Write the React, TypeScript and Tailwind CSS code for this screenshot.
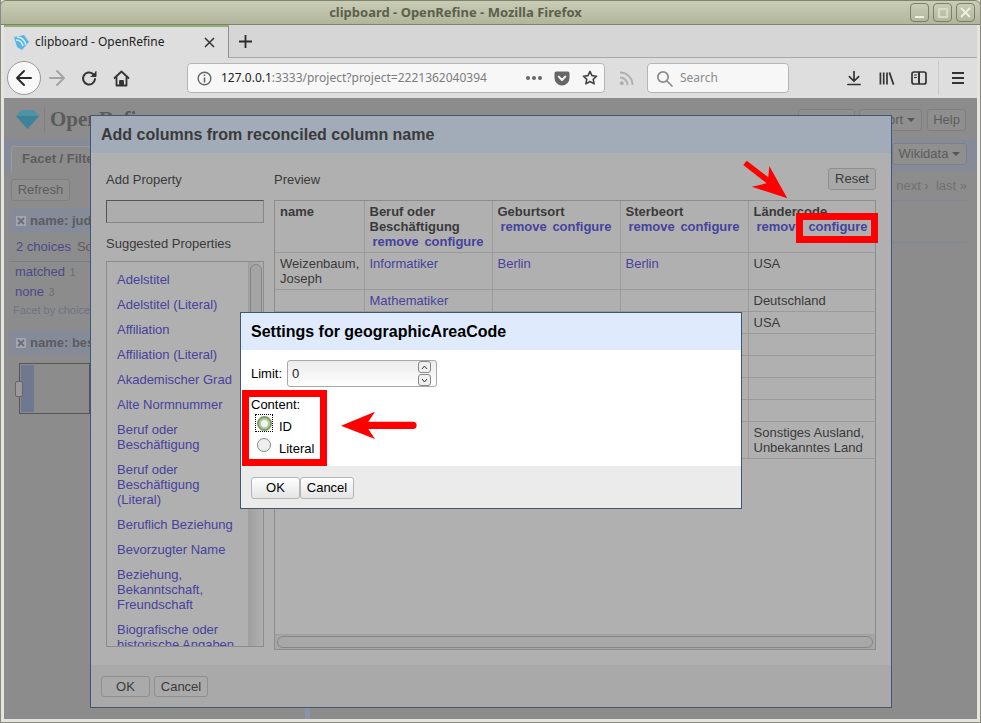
import React from 'react';

const PROPS = [
  'Adelstitel',
  'Adelstitel (Literal)',
  'Affiliation',
  'Affiliation (Literal)',
  'Akademischer Grad',
  'Alte Normnummer',
  'Beruf oder Beschäftigung',
  'Beruf oder Beschäftigung (Literal)',
  'Beruflich Beziehung',
  'Bevorzugter Name',
  'Beziehung, Bekanntschaft, Freundschaft',
  'Biografische oder historische Angaben',
];

const ROWS: [string, string, string, string, string, string][] = [
  ['Weizenbaum, Joseph', 'Informatiker', 'Berlin', 'Berlin', 'USA', 'h-[37px]'],
  ['', 'Mathematiker', '', '', 'Deutschland', 'h-[22px]'],
  ['', '', '', '', 'USA', 'h-[22px]'],
  ['', '', '', '', '', 'h-[22px]'],
  ['', '', '', '', '', 'h-[22px]'],
  ['', '', '', '', '', 'h-[22px]'],
  ['', '', '', '', '', 'h-[22px]'],
  ['', '', '', '', 'Sonstiges Ausland, Unbekanntes Land', 'h-[37px]'],
];

const HEADS = ['Beruf oder Beschäftigung', 'Geburtsort', 'Sterbeort', 'Ländercode'];

const WindowButton = ({ children }: { children: React.ReactNode }) => (
  <div className="flex h-[19px] w-[19px] items-center justify-center rounded-[4px] border border-[#7c8068] bg-gradient-to-b from-[#c9cdb4] to-[#b3b79f]">
    {children}
  </div>
);

const DimButton = ({ children, className = '' }: { children?: React.ReactNode; className?: string }) => (
  <div className={`flex h-[22px] shrink-0 items-center justify-center whitespace-nowrap rounded-[3px] border border-[#7f7f7f] bg-[#8f8f8f] text-[13px] text-[#5c5c5c] ${className}`}>
    {children}
  </div>
);

const Caret = () => <span className="ml-1 inline-block h-0 w-0 border-x-[4px] border-t-[4px] border-x-transparent border-t-[#555]" />;

const FacetClose = () => (
  <span className="mr-[4px] flex h-[10px] w-[10px] shrink-0 items-center justify-center bg-[#a3a6b0]">
    <svg width="8" height="8" viewBox="0 0 8 8" fill="none" stroke="#6a6d78" strokeWidth="1.800"><path d="M1 1l6 6M7 1 1 7" /></svg>
  </span>
);

function Toolbar() {
  return (
    <div className="flex h-[40px] shrink-0 items-center bg-[#dedede] pl-[3px] pr-[13px]">
      <div className="flex h-[34px] w-[34px] shrink-0 items-center justify-center rounded-full border border-[#9a9a9a] bg-[#f8f8f8]">
        <svg width="18" height="18" viewBox="0 0 18 18" fill="none" stroke="#2b2b2b" strokeWidth="2" strokeLinecap="round" strokeLinejoin="round">
          <path d="M16 9H2M9 2 2 9l7 7" />
        </svg>
      </div>
      <svg className="ml-[7px]" width="18" height="18" viewBox="0 0 18 18" fill="none" stroke="#a3a3a3" strokeWidth="2" strokeLinecap="round" strokeLinejoin="round">
        <path d="M2 9h14M9 2l7 7-7 7" />
      </svg>
      <svg className="ml-[15px]" width="17" height="17" viewBox="0 0 17 17" fill="none" stroke="#333" strokeWidth="2" strokeLinecap="round" strokeLinejoin="round">
        <path d="M14 9a6 6 0 1 1-2-5l2 2" />
        <path d="M15 1.500V6.500H10" fill="#333" strokeWidth="1" />
      </svg>
      <svg className="ml-[15px]" width="17" height="17" viewBox="0 0 17 17" fill="none" stroke="#333" strokeWidth="1.800" strokeLinejoin="round">
        <path d="M1 8.500 8.500 1.500 16 8.500M3.500 7v8.500h10V7" />
        <path d="M7 15.500v-4.500h3v4.500" fill="#333" />
      </svg>
      <div className="ml-[57px] flex h-[30px] w-[418px] shrink-0 items-center whitespace-nowrap rounded-[4px] border border-[#b5b5b5] bg-[#f7f7f7] pl-[9px] pr-[6px] font-['Noto_Sans',sans-serif] text-[12px]">
        <svg width="15" height="15" viewBox="0 0 15 15" fill="none" stroke="#666" strokeWidth="1.400">
          <circle cx="7.500" cy="7.500" r="6.300" />
          <path d="M7.500 6.500V11.500M7.500 3.500V5" strokeWidth="1.600" />
        </svg>
        <span className="ml-[9px] text-[#222]">127.0.0.1</span>
        <span className="text-[#7c7c7c]">:3333/project?project=2221362040394</span>
        <div className="flex-1" />
        <div className="flex gap-[2px]">
          <span className="h-[4px] w-[4px] rounded-full bg-[#666]" />
          <span className="h-[4px] w-[4px] rounded-full bg-[#666]" />
          <span className="h-[4px] w-[4px] rounded-full bg-[#666]" />
        </div>
        <svg className="ml-[12px]" width="16" height="15" viewBox="0 0 17 16">
          <path d="M2.500 0.500h12a2 2 0 0 1 2 2v5a8 8 0 0 1-16 0v-5a2 2 0 0 1 2-2z" fill="#666" />
          <path d="M5 6l3.500 3.500L12 6" fill="none" stroke="#f7f7f7" strokeWidth="2.200" strokeLinecap="round" strokeLinejoin="round" />
        </svg>
        <svg className="ml-[12px]" width="16" height="16" viewBox="0 0 17 17" fill="none" stroke="#444" strokeWidth="1.700" strokeLinejoin="round">
          <path d="M8.500 1.500 10.600 6l4.900.6-3.600 3.300 1 4.800-4.400-2.400-4.400 2.400 1-4.800L1.500 6.600 6.400 6z" />
        </svg>
      </div>
      <svg className="ml-[14px]" width="15" height="15" viewBox="0 0 15 15" fill="none" stroke="#b0b0b0" strokeWidth="2">
        <circle cx="2.800" cy="12.200" r="2" fill="#b0b0b0" stroke="none" />
        <path d="M1 6.500a7.500 7.500 0 0 1 7.500 7.500M1 1.500A12.500 12.500 0 0 1 13.500 14" />
      </svg>
      <div className="ml-[13px] flex h-[30px] w-[142px] shrink-0 items-center rounded-[4px] border border-[#b5b5b5] bg-[#f7f7f7] pl-[8px] font-['Noto_Sans',sans-serif] text-[12px] text-[#8a8a8a]">
        <svg width="17" height="17" viewBox="0 0 17 17" fill="none" stroke="#8a8a8a" strokeWidth="1.700" strokeLinecap="round">
          <circle cx="7" cy="7" r="5.200" />
          <path d="m11 11 5 5" />
        </svg>
        <span className="ml-[7px]">Search</span>
      </div>
      <div className="flex-1" />
      <svg width="14" height="16" viewBox="0 0 15 16" fill="none" stroke="#333" strokeWidth="1.800" strokeLinecap="round" strokeLinejoin="round">
        <path d="M7.500 1v10M2.500 6.500l5 5 5-5M1 15h13" />
      </svg>
      <svg className="ml-[18px]" width="16" height="15" viewBox="0 0 17 15" fill="none" stroke="#333" strokeWidth="1.800">
        <path d="M1.500 1v13M5 1v13M8.500 1v13M11 1l4.500 13" />
      </svg>
      <svg className="ml-[16px]" width="16" height="14" viewBox="0 0 16 14" fill="none" stroke="#333" strokeWidth="1.700">
        <rect x="1" y="1" width="14" height="12" rx="2" />
        <path d="M8 1v12" strokeWidth="2" />
        <path d="M3 4h3M3 6.500h3" strokeWidth="1" />
      </svg>
      <div className="ml-[11px] mr-[13px] h-[34px] w-px bg-[#c8c8c8]" />
      <svg width="12" height="12" viewBox="0 0 12 12" fill="none" stroke="#333" strokeWidth="2">
        <path d="M0 1h12M0 6h12M0 11h12" />
      </svg>
    </div>
  );
}

function BackgroundPage() {
  return (
    <div className="flex h-full flex-col bg-[#8c8c8c] font-['Liberation_Sans',sans-serif] text-[13px] text-[#5c5c5c]">
      <div className="flex h-[41px] shrink-0 items-center pl-[12px] pr-[11px] pt-[2px]">
        <svg width="23" height="19" viewBox="0 0 23 19">
          <path d="M5 0h13l5 6-11.500 13L0 6z" fill="#4f93a8" />
          <path d="M0 6h23L11.500 19z" fill="#3f8298" />
        </svg>
        <div className="ml-[5px] h-[24px] w-px bg-[#808080]" />
        <span className="ml-[5px] font-['Liberation_Serif',serif] text-[21px] font-bold text-[#5a5a5a]">OpenRefine</span>
        <div className="flex-1" />
        <DimButton className="w-[57px]" />
        <DimButton className="ml-[4px] w-[63px] pl-[22px]">ort<Caret /></DimButton>
        <DimButton className="ml-[5px] w-[39px]">Help</DimButton>
      </div>
      <div className="flex h-[32px] shrink-0 items-end justify-between bg-[#868b9a] pl-[7px] pr-[10px]">
        <div className="mb-[-1px] flex h-[26px] w-[80px] items-center whitespace-nowrap rounded-t-[3px] border-l border-t border-[#9a9a9a] bg-[#8c8c8c] pb-[2px] pl-[10px] font-bold">Facet / Filter</div>
        <DimButton className="mb-[6px] h-[20px] w-[75px]">Wikidata<Caret /></DimButton>
      </div>
      <div className="flex flex-1 flex-row">
        <div className="w-[86px] shrink-0 pl-[5px] pt-[8px]">
          <DimButton className="ml-[2px] w-[59px]">Refresh</DimButton>
          <div className="mt-[7px] h-[114px] overflow-hidden whitespace-nowrap rounded-[5px] bg-[#868b9a]">
            <div className="flex h-[25px] items-center pl-[7px] font-bold">
              <FacetClose />name: judge
            </div>
            <div className="flex h-[29px] items-center border-b border-[#7a7f8d] bg-[#8c8c8c] pb-[1px] pl-[7px]">
              <span className="text-[#4b4a8a]">2 choices</span>
              <span className="ml-[6px]">Sort</span>
            </div>
            <div className="h-[60px] bg-[#8c8c8c] pl-[6px]">
              <div className="h-[20px] text-[#4b4a8a]">matched <span className="ml-[1px] text-[11px] text-[#6e6e6e]">1</span></div>
              <div className="h-[20px] text-[#4b4a8a]">none <span className="ml-[1px] text-[11px] text-[#6e6e6e]">3</span></div>
              <div className="-ml-[2px] text-[11px] text-[#6f7284]">Facet by choice</div>
            </div>
          </div>
          <div className="mt-[8px] h-[112px] overflow-hidden whitespace-nowrap rounded-[5px] bg-[#868b9a]">
            <div className="flex h-[25px] items-center pl-[7px] font-bold">
              <FacetClose />name: best
            </div>
            <div className="h-[87px] bg-[#8c8c8c] pl-[10px] pt-[8px]">
              <div className="relative flex h-[51px] border border-[#555] bg-[#8c8c8c] py-[1px] pl-[1px]">
                <div className="w-[13px] bg-[#6e7890]" />
                <div className="absolute left-[-5px] top-[17px] h-[16px] w-[8px] rounded-[2px] border border-[#666] bg-[#9a9a9a]" />
              </div>
            </div>
          </div>
        </div>
        <div className="flex-1 pr-[10px] pt-[5px] text-right text-[#707070]">
          <div>next › &nbsp;last »</div>
          <div className="mt-[4px] h-[43px] border-y border-[#7f8799]" />
        </div>
      </div>
    </div>
  );
}

function AddColumnsDialog() {
  return (
    <div className="absolute left-[86px] top-[17px] flex h-[593px] w-[802px] flex-col border border-[#3f5770] bg-[#b0b0b0] font-['Liberation_Sans',sans-serif] text-[13px] text-[#3a3a3a]">
      <div className="flex h-[37px] shrink-0 items-center bg-[#a2abb8] pl-[10px] text-[16px] font-bold">Add columns from reconciled column name</div>
      <div className="flex flex-1 gap-[10px] px-[15px] pt-[15px]">
        <div className="flex w-[158px] shrink-0 flex-col">
          <div className="h-[32px] pt-[2px]">Add Property</div>
          <div className="h-[23px] border border-[#888] border-l-[#555] border-t-[#555] bg-[#adadad]" />
          <div className="h-[38px] pt-[11px]">Suggested Properties</div>
          <div className="flex h-[386px] overflow-hidden border border-[#8c8c8c]">
            <div className="flex-1 overflow-hidden pl-[10px] pr-[2px] pt-[10px] leading-[15px] text-[#47429c]">
              {PROPS.map((p) => (
                <div key={p} className="mb-[10px]">{p}</div>
              ))}
            </div>
            <div className="w-[15px] shrink-0 border-l border-[#a0a0a0] bg-gradient-to-r from-[#a0a0a0] to-[#b0b0b0] px-[1px] pt-[2px]">
              <div className="h-[150px] rounded-t-[6px] border border-[#858585] bg-[#a4a4a4]" />
            </div>
          </div>
        </div>
        <div className="flex w-[602px] shrink-0 flex-col">
          <div className="flex h-[32px] items-start justify-between">
            <span className="pt-[2px]">Preview</span>
            <div className="flex h-[22px] w-[48px] items-center justify-center rounded-[3px] border border-[#8f8f8f] bg-[#a8a8a8]">Reset</div>
          </div>
          <div className="flex h-[450px] flex-col border border-[#8c8c8c]">
            <div className="flex-1 overflow-hidden">
              <table className="w-[600px] table-fixed border-collapse">
                <colgroup>
                  <col className="w-[89px]" />
                  <col className="w-[128px]" />
                  <col className="w-[128px]" />
                  <col className="w-[128px]" />
                  <col className="w-[127px]" />
                </colgroup>
                <thead>
                  <tr className="h-[51px] border-b border-[#9a9a9a] align-top">
                    <th className="px-[5px] pt-[3px] text-left font-bold leading-[15px]">name</th>
                    {HEADS.map((h) => (
                      <th key={h} className="border-l border-[#9a9a9a] px-[5px] pt-[3px] text-left font-bold leading-[15px]">
                        {h}
                        <div className="whitespace-nowrap pl-[3px] text-[#47429c]">
                          remove <span className="ml-[2px]">configure</span>
                        </div>
                      </th>
                    ))}
                  </tr>
                </thead>
                <tbody>
                  {ROWS.map((r, i) => (
                    <tr key={i} className={`border-b border-[#9a9a9a] align-top leading-[15px] ${r[5]}`}>
                      <td className="px-[5px] pt-[3px]">{r[0]}</td>
                      <td className="border-l border-[#9a9a9a] px-[5px] pt-[3px] text-[#47429c]">{r[1]}</td>
                      <td className="border-l border-[#9a9a9a] px-[5px] pt-[3px] text-[#47429c]">{r[2]}</td>
                      <td className="border-l border-[#9a9a9a] px-[5px] pt-[3px] text-[#47429c]">{r[3]}</td>
                      <td className="border-l border-[#9a9a9a] px-[5px] pt-[3px]">{r[4]}</td>
                    </tr>
                  ))}
                </tbody>
              </table>
            </div>
            <div className="h-[15px] shrink-0 border-t border-[#a0a0a0] bg-[#a6a6a6] px-[2px] py-[1px]">
              <div className="h-full rounded-full border border-[#858585] bg-[#a8a8a8]" />
            </div>
          </div>
        </div>
      </div>
      <div className="flex h-[42px] shrink-0 items-start gap-[4px] bg-[#a9a9a9] pl-[10px] pt-[11px]">
        <div className="flex h-[21px] w-[49px] items-center justify-center rounded-[3px] border border-[#8f8f8f] bg-[#aaa]">OK</div>
        <div className="flex h-[21px] w-[54px] items-center justify-center rounded-[3px] border border-[#8f8f8f] bg-[#aaa]">Cancel</div>
      </div>
    </div>
  );
}

function SettingsDialog() {
  return (
    <div className="absolute left-[236px] top-[214px] flex h-[197px] w-[502px] flex-col border border-[#3f5770] bg-white font-['Liberation_Sans',sans-serif] text-[13px] text-black">
      <div className="flex h-[37px] shrink-0 items-center bg-[#dfebfc] pl-[10px] text-[16px] font-bold">Settings for geographicAreaCode</div>
      <div className="flex-1 pl-[10px] pt-[10px]">
        <div className="flex items-center">
          <span>Limit:</span>
          <div className="ml-[5px] flex h-[27px] w-[150px] items-center justify-between rounded-[3px] border border-[#a8a8a8] bg-gradient-to-b from-[#ececec] to-white pl-[4px] pr-[5px] text-[#223]">
            0
            <div className="flex flex-col gap-[1px]">
              <span className="flex h-[12px] w-[13px] items-center justify-center rounded-[3px] border border-[#888] bg-[#f0f0f0]">
                <svg width="7" height="5" viewBox="0 0 7 5" fill="none" stroke="#333" strokeWidth="1"><path d="M1 4 3.500 1 6 4" /></svg>
              </span>
              <span className="flex h-[12px] w-[13px] items-center justify-center rounded-[3px] border border-[#888] bg-[#f0f0f0]">
                <svg width="7" height="5" viewBox="0 0 7 5" fill="none" stroke="#333" strokeWidth="1"><path d="M1 1l2.500 3L6 1" /></svg>
              </span>
            </div>
          </div>
        </div>
        <div className="mt-[10px] leading-[15px]">Content:</div>
        <div className="mt-[2px] flex h-[22px] items-start pl-[4px]">
          <div className="flex h-[18px] w-[18px] items-center justify-center border border-dotted border-black">
            <span className="flex h-[15px] w-[15px] items-center justify-center rounded-full border-2 border-[#7f9a6c] bg-[#b4cda0]">
              <span className="h-[7px] w-[7px] rounded-full bg-[#f4f4f4]" />
            </span>
          </div>
          <span className="ml-[6px] mt-[5px] leading-[15px]">ID</span>
        </div>
        <div className="flex h-[22px] items-start pl-[6px]">
          <span className="mt-[2px] h-[14px] w-[14px] rounded-full border border-[#888] bg-[#eee]" />
          <span className="ml-[8px] mt-[5px] leading-[15px]">Literal</span>
        </div>
      </div>
      <div className="flex h-[42px] shrink-0 items-start bg-[#ebebeb] pl-[10px] pt-[11px]">
        <div className="flex h-[22px] w-[49px] items-center justify-center rounded-[3px] border border-[#b5b5b5] bg-gradient-to-b from-white to-[#e4e4e4]">OK</div>
        <div className="flex h-[22px] w-[54px] items-center justify-center rounded-[3px] border border-[#b5b5b5] bg-gradient-to-b from-white to-[#e4e4e4]">Cancel</div>
      </div>
    </div>
  );
}

export default function App() {
  return (
    <div className="flex h-[723px] w-[981px] flex-col overflow-hidden border-x border-b border-x-[#8a8a80] border-b-[#8a8a80] bg-[#e4e4e0]">
      <div className="-mx-px flex h-[25px] shrink-0 items-center rounded-t-[6px] border border-[#7f8468] bg-gradient-to-b from-[#c9cdb5] to-[#b0b59c] pr-[5px] font-['Noto_Sans',sans-serif] text-[13px] font-bold text-[#5c5f4d]">
        <span className="flex-1 text-center">clipboard - OpenRefine - Mozilla Firefox</span>
        <div className="flex gap-[4px]">
          <WindowButton>
            <span className="mt-[9px] h-[2px] w-[9px] bg-[#eef0e2]" />
          </WindowButton>
          <WindowButton>
            <span className="h-[10px] w-[10px] border-2 border-[#d8dbc6]" />
          </WindowButton>
          <WindowButton>
            <svg width="11" height="11" viewBox="0 0 11 11" fill="none" stroke="#eef0e2" strokeWidth="1.800"><path d="M1 1l9 9M10 1l-9 9" /></svg>
          </WindowButton>
        </div>
      </div>
      <div className="relative mx-[3px] h-[33px] shrink-0 border-b border-[#a8a8a8] bg-[#d6d6d6] font-['Noto_Sans',sans-serif] text-[12px] text-[#222]">
        <div className="flex h-full items-center">
          <div className="flex h-[33px] w-[225px] items-center border-r border-t-2 border-r-[#8f8f8f] border-t-[#94ad76] bg-[#dedede] pl-[9px] pr-[13px]">
            <svg width="17" height="17" viewBox="0 0 17 17">
              <path d="M1 3 11 1l5 7-7 8L4 13z" fill="#5ab4e6" />
              <path d="M4 3c4 0 8 3 9 8M3 6c3 0 6 2 7 6" fill="none" stroke="#d6f0fc" strokeWidth="1.500" />
            </svg>
            <span className="ml-[5px] flex-1">clipboard - OpenRefine</span>
            <svg width="11" height="11" viewBox="0 0 11 11" fill="none" stroke="#333" strokeWidth="1.500"><path d="M1 1l9 9M10 1l-9 9" /></svg>
          </div>
          <svg className="ml-[9px]" width="15" height="15" viewBox="0 0 15 15" fill="none" stroke="#2b2b2b" strokeWidth="1.800"><path d="M7.500 1v13M1 7.500h13" /></svg>
        </div>
      </div>
      <div className="mx-[3px]">
        <Toolbar />
      </div>
      <div className="relative mx-[3px] h-[621px] shrink-0">
        <BackgroundPage />
        <AddColumnsDialog />
        <SettingsDialog />
        <div className="absolute left-[792px] top-[115px] h-[30px] w-[82px] border-[7px] border-[#ff0000]" />
        <div className="absolute left-[238px] top-[292px] h-[76px] w-[85px] border-[7px] border-[#ff0000]" />
        <svg className="absolute left-[736px] top-[60px]" width="50" height="42" viewBox="0 0 50 42" fill="#ff0000">
          <path d="M6.700 2.700 3.300 7 26.700 25.300 11.700 28.700 47.300 40.300 29.300 8 28.300 19.300Z" />
        </svg>
        <svg className="absolute left-[336px] top-[313px]" width="78" height="29" viewBox="0 0 78 29" fill="#ff0000">
          <path d="M1 14.700 35 .7 28.300 10.700H73a3.600 3.600 0 0 1 0 7.300H28.300L35 28z" />
        </svg>
        <div className="absolute left-[301px] top-[610px] h-[11px] w-[5px] bg-[#8a93a8]" />
      </div>
    </div>
  );
}
